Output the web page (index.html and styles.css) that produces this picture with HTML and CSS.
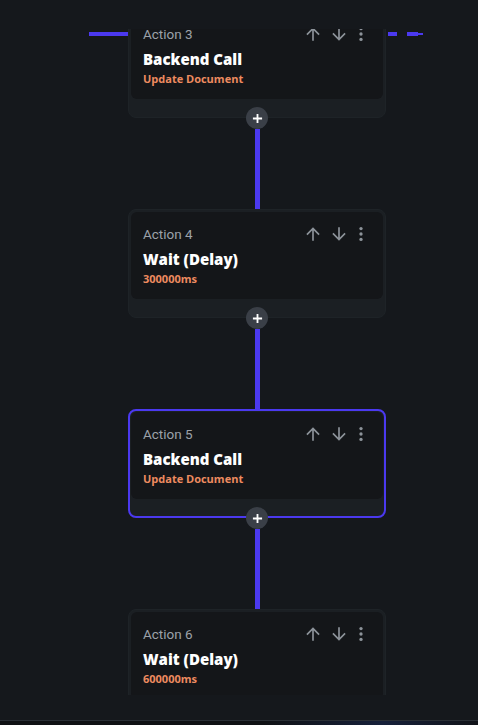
FILE: index.html
```html
<!DOCTYPE html>
<html>
<head>
<meta charset="utf-8">
<link rel="stylesheet" href="styles.css">
</head>
<body>
<div class="viewport">
  <div class="edge-line seg-a"></div>
  <div class="edge-line seg-b"></div>
  <div class="edge-line seg-c"></div>
  <div class="edge-line seg-d"></div>
  <div class="flow">
    <div class="card">
      <div class="inner">
        <div class="head">
          <span class="label">Action 3</span>
          <div class="tools">
            <svg class="ic up" viewBox="0 0 24 24"><path d="M4 12l1.41 1.41L11 7.83V20h2V7.83l5.58 5.59L20 12l-8-8-8 8z"/></svg>
            <svg class="ic down" viewBox="0 0 24 24"><path d="M20 12l-1.41-1.41L13 16.17V4h-2v12.17l-5.58-5.59L4 12l8 8 8-8z"/></svg>
            <svg class="ic more" viewBox="0 0 24 24"><circle cx="12" cy="5.5" r="2"/><circle cx="12" cy="12" r="2"/><circle cx="12" cy="18.5" r="2"/></svg>
          </div>
        </div>
        <div class="title">Backend Call</div>
        <div class="sub">Update Document</div>
      </div>
    </div>
    <div class="add"><svg viewBox="0 0 12 12"><path d="M6 1v10M1 6h10"/></svg></div>
    <div class="link"></div>

    <div class="card">
      <div class="inner">
        <div class="head">
          <span class="label">Action 4</span>
          <div class="tools">
            <svg class="ic up" viewBox="0 0 24 24"><path d="M4 12l1.41 1.41L11 7.83V20h2V7.83l5.58 5.59L20 12l-8-8-8 8z"/></svg>
            <svg class="ic down" viewBox="0 0 24 24"><path d="M20 12l-1.41-1.41L13 16.17V4h-2v12.17l-5.58-5.59L4 12l8 8 8-8z"/></svg>
            <svg class="ic more" viewBox="0 0 24 24"><circle cx="12" cy="5.5" r="2"/><circle cx="12" cy="12" r="2"/><circle cx="12" cy="18.5" r="2"/></svg>
          </div>
        </div>
        <div class="title">Wait (Delay)</div>
        <div class="sub">300000ms</div>
      </div>
    </div>
    <div class="add"><svg viewBox="0 0 12 12"><path d="M6 1v10M1 6h10"/></svg></div>
    <div class="link"></div>

    <div class="card selected">
      <div class="inner">
        <div class="head">
          <span class="label">Action 5</span>
          <div class="tools">
            <svg class="ic up" viewBox="0 0 24 24"><path d="M4 12l1.41 1.41L11 7.83V20h2V7.83l5.58 5.59L20 12l-8-8-8 8z"/></svg>
            <svg class="ic down" viewBox="0 0 24 24"><path d="M20 12l-1.41-1.41L13 16.17V4h-2v12.17l-5.58-5.59L4 12l8 8 8-8z"/></svg>
            <svg class="ic more" viewBox="0 0 24 24"><circle cx="12" cy="5.5" r="2"/><circle cx="12" cy="12" r="2"/><circle cx="12" cy="18.5" r="2"/></svg>
          </div>
        </div>
        <div class="title">Backend Call</div>
        <div class="sub">Update Document</div>
      </div>
    </div>
    <div class="add"><svg viewBox="0 0 12 12"><path d="M6 1v10M1 6h10"/></svg></div>
    <div class="link"></div>

    <div class="card">
      <div class="inner">
        <div class="head">
          <span class="label">Action 6</span>
          <div class="tools">
            <svg class="ic up" viewBox="0 0 24 24"><path d="M4 12l1.41 1.41L11 7.83V20h2V7.83l5.58 5.59L20 12l-8-8-8 8z"/></svg>
            <svg class="ic down" viewBox="0 0 24 24"><path d="M20 12l-1.41-1.41L13 16.17V4h-2v12.17l-5.58-5.59L4 12l8 8 8-8z"/></svg>
            <svg class="ic more" viewBox="0 0 24 24"><circle cx="12" cy="5.5" r="2"/><circle cx="12" cy="12" r="2"/><circle cx="12" cy="18.5" r="2"/></svg>
          </div>
        </div>
        <div class="title">Wait (Delay)</div>
        <div class="sub">600000ms</div>
      </div>
    </div>
  </div>
</div>
<div class="spacer"></div>
<div class="bottom"></div>
</body>
</html>
```

FILE: styles.css
```css
* { box-sizing: border-box; }
html, body {
  margin: 0;
  padding: 0;
  width: 478px;
  height: 725px;
  overflow: hidden;
  background: #15181c;
  font-family: "Open Sans", "Liberation Sans", sans-serif;
}
.viewport {
  position: relative;
  margin-top: 29px;
  height: 666px;
  overflow: hidden;
}
.edge-line {
  position: absolute;
  background: #4b39ef;
  height: 4px;
  top: 3px;
  z-index: 0;
}
.seg-a { left: 89px; width: 42px; }
.seg-b { left: 388px; width: 9px; }
.seg-c { left: 407px; width: 11px; }
.seg-d { left: 418px; width: 5px; height: 2px; top: 4px; }
.flow {
  position: relative;
  z-index: 1;
  width: 258px;
  margin-left: 128px;
  margin-top: -20px;
  display: flex;
  flex-direction: column;
  align-items: center;
}
.card {
  width: 258px;
  height: 109px;
  flex: none;
  background: #1b1f23;
  border: 1px solid #1e2327;
  border-radius: 8px;
  padding: 2px 2px 0;
}
.card.selected {
  border: 2px solid #4b39ef;
  padding: 1px 1px 0;
}
.inner {
  height: 87px;
  background: #141619;
  border-radius: 6px;
  padding: 12px 12px 0;
}
.head {
  display: flex;
  justify-content: space-between;
  align-items: center;
  height: 20px;
}
.label {
  font-family: "Roboto", "Open Sans", sans-serif;
  font-size: 13.5px;
  color: #9ca2a9;
  line-height: 20px;
}
.tools {
  display: flex;
  align-items: center;
}
.ic {
  width: 20px;
  height: 20px;
  fill: #8d939a;
  display: block;
}
.ic.down { margin-left: 6px; }
.ic.more { margin-left: 2px; }
.title {
  margin-top: 4px;
  font-size: 15px;
  font-weight: 800;
  color: #ffffff;
  line-height: 22px;
}
.sub {
  margin-top: 1px;
  font-size: 11px;
  font-weight: 700;
  color: #ee8b60;
  line-height: 16px;
}
.add {
  width: 22px;
  height: 22px;
  flex: none;
  border-radius: 50%;
  background: #3a3f47;
  margin-top: -11px;
  position: relative;
  z-index: 2;
  display: flex;
  align-items: center;
  justify-content: center;
}
.add svg {
  width: 11px;
  height: 11px;
  stroke: #ffffff;
  stroke-width: 2;
  fill: none;
}
.link {
  width: 5px;
  height: 80px;
  flex: none;
  background: #4b39ef;
}
.spacer {
  height: 25px;
}
.bottom {
  height: 5px;
  border-top: 1px solid #2a2f35;
  background: linear-gradient(90deg, #0f1114 0%, #0f1114 55%, #16203a 80%, #111318 100%);
}
```
